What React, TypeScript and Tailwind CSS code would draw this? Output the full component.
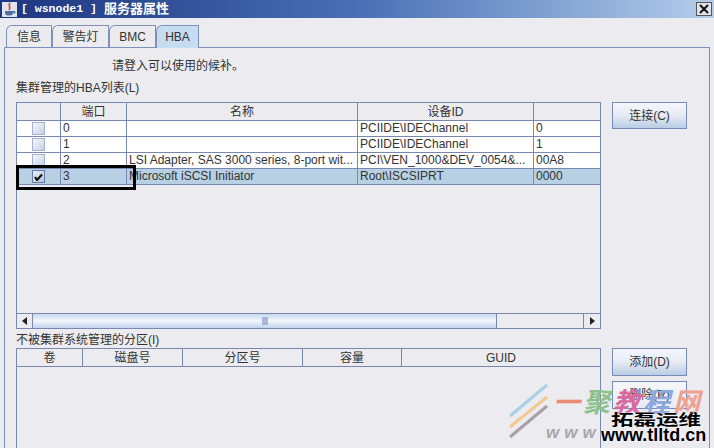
const rows = [
  { port: "0", name: "", dev: "PCIIDE\\IDEChannel", last: "0" },
  { port: "1", name: "", dev: "PCIIDE\\IDEChannel", last: "1" },
  { port: "2", name: "LSI Adapter, SAS 3000 series, 8-port wit...", dev: "PCI\\VEN_1000&DEV_0054&...", last: "00A8" },
  { port: "3", name: "Microsoft iSCSI Initiator", dev: "Root\\ISCSIPRT", last: "0000", selected: true },
]

const Tab = ({ label, width, active }: { label: string; width: string; active?: boolean }) => (
  <div
    className={`${width} h-[23px] -mb-px flex items-center justify-center border border-b-0 border-[#8090bd] rounded-tl-[6px] ${
      active ? "bg-[#c6dcf0] relative z-10" : ""
    }`}
  >
    {label}
  </div>
)

const Button = ({ label, height, faded }: { label: string; height: string; faded?: boolean }) => (
  <div
    className={`w-[75px] ${height} flex items-center justify-center border border-[#7a8ab8] bg-gradient-to-b ${
      faded ? "from-[#f6f7fa] to-[#e8ebf3]" : "from-[#f4f6fa] via-[#e6ebf4] to-[#b9cde4]"
    }`}
  >
    {label}
  </div>
)

const Checkbox = ({ checked }: { checked?: boolean }) => (
  <div
    className={`w-[13px] h-[13px] flex items-center justify-center border bg-gradient-to-br ${
      checked ? "border-[#6a7aa8] from-[#e8edf5] to-[#b4c6de]" : "border-[#a4b2d0] from-[#f6f8fb] to-[#c4d2e6]"
    }`}
  >
    {checked && (
      <svg width="9" height="9" viewBox="0 0 9 9">
        <path d="M1 5 L3 8 L8 2.500" fill="none" stroke="#111" strokeWidth="2.200" />
      </svg>
    )}
  </div>
)

export default function App() {
  return (
    <div className="w-[714px] h-[448px] overflow-hidden relative bg-[repeating-conic-gradient(#e4e4ea_0_25%,#f3f3f5_0_50%)] bg-[length:2px_2px] text-[#333] text-[12px] font-['Liberation_Sans','Noto_Sans_CJK_SC',sans-serif]">
      {/* Title bar */}
      <div className="h-[18px] flex items-center px-[2px] bg-gradient-to-r from-[#1d3680] via-[#4a6fb4] to-[#b4cdea] text-white font-bold">
        <svg width="15" height="15" viewBox="0 0 15 15" className="mr-[4px]">
          <rect width="15" height="15" fill="#dfe4ee" />
          <path d="M8 1 C5 4 10 5 7 8" fill="none" stroke="#d8501e" strokeWidth="1.800" />
          <path d="M3 9 H11 V11 C11 13 9 13.500 7 13.500 C5 13.500 3 13 3 11 Z" fill="#4f70a0" />
          <path d="M11 9.500 H13 V11 H11" fill="none" stroke="#4f70a0" />
        </svg>
        <span className="font-['Liberation_Mono',monospace] text-[11.500px] whitespace-pre">[ wsnode1 ]</span>
        <span className="text-[13px] ml-[7px]">服务器属性</span>
        <div className="ml-auto w-[16px] h-[14px] flex items-center justify-center bg-[#dfe3ea] border border-[#555]">
          <svg width="10" height="10" viewBox="0 0 10 10">
            <path d="M1 1 L9 9 M9 1 L1 9" stroke="#111" strokeWidth="2" />
          </svg>
        </div>
      </div>

      {/* Tabs */}
      <div className="flex mt-[7px] pl-[6px] h-[22px]">
        <Tab label="信息" width="w-[46px]" />
        <Tab label="警告灯" width="w-[57px]" />
        <Tab label="BMC" width="w-[47px]" />
        <Tab label="HBA" width="w-[43px]" active />
      </div>

      <div className="ml-[4px] w-[706px] h-[420px] border border-[#8090bd] px-[11px]">
        <div className="h-[17px] mt-[9px] pl-[96px] flex items-center">请登入可以使用的候补。</div>
        <div className="h-[16px] mt-[6px] flex items-center">集群管理的HBA列表(L)</div>

        <div className="flex gap-[11px] mt-[6px]">
          <div className="w-[585px]">
            {/* HBA table */}
            <div className="h-[212px] border border-[#7a88b0] flex flex-col">
              <div className="grid grid-cols-[44px_66px_231px_176px_1fr] h-[18px] border-b border-[#7a88b0]">
                <div className="border-r border-[#7a88b0]" />
                <div className="border-r border-[#7a88b0] text-center">端口</div>
                <div className="border-r border-[#7a88b0] text-center">名称</div>
                <div className="border-r border-[#7a88b0] text-center">设备ID</div>
                <div />
              </div>
              {rows.map((row) => (
                <div
                  key={row.port}
                  className={`grid grid-cols-[44px_66px_231px_176px_1fr] h-[16px] border-b border-[#7a88b0] leading-[15px] ${
                    row.selected ? "bg-[#b8d0e4]" : "bg-white"
                  }`}
                >
                  <div className="border-r border-[#7a88b0] flex items-center justify-center pr-[1px]">
                    <Checkbox checked={row.selected} />
                  </div>
                  <div className="border-r border-[#7a88b0] pl-[2px]">{row.port}</div>
                  <div className="border-r border-[#7a88b0] pl-[2px] whitespace-nowrap overflow-hidden">{row.name}</div>
                  <div className="border-r border-[#7a88b0] pl-[2px] whitespace-nowrap overflow-hidden">{row.dev}</div>
                  <div className="pl-[2px]">{row.last}</div>
                </div>
              ))}
            </div>
            {/* Scrollbar */}
            <div className="h-[16px] border border-[#7a88b0] flex -mt-px">
              <div className="w-[16px] border-r border-[#7a88b0] flex items-center justify-center">
                <svg width="6" height="8" viewBox="0 0 6 8"><path d="M5 0 V8 L0 4 Z" fill="#222" /></svg>
              </div>
              <div className="w-[464px] border-r border-[#7a88b0] bg-gradient-to-b from-[#c8daf0] via-[#f2f6fb] to-[#c0d4ec] flex items-center justify-center">
                <svg width="6" height="8" viewBox="0 0 6 8"><path d="M1 0 V8 M3 0 V8 M5 0 V8" stroke="#6a80c0" /></svg>
              </div>
              <div className="flex-1 border-r border-[#7a88b0]" />
              <div className="w-[16px] flex items-center justify-center">
                <svg width="6" height="8" viewBox="0 0 6 8"><path d="M1 0 V8 L6 4 Z" fill="#222" /></svg>
              </div>
            </div>
          </div>
          <Button label="连接(C)" height="h-[27px]" />
        </div>

        <div className="h-[16px] mt-[3px] flex items-center">不被集群系统管理的分区(I)</div>

        <div className="flex gap-[11px]">
          <div className="w-[585px] h-[110px] border border-[#7a88b0]">
            <div className="grid grid-cols-[66px_100px_120px_99px_1fr] h-[18px] border-b border-[#7a88b0] text-center">
              {["卷", "磁盘号", "分区号", "容量", "GUID"].map((title, i) => (
                <div key={title} className={i < 4 ? "border-r border-[#7a88b0]" : ""}>
                  {title}
                </div>
              ))}
            </div>
          </div>
          <div className="flex flex-col gap-[5px]">
            <Button label="添加(D)" height="h-[28px]" />
            <Button label="删除(R)" height="h-[28px]" faded />
          </div>
        </div>
      </div>

      {/* Callout box drawn over the selected row */}
      <div className="absolute left-[16px] top-[165px] w-[120px] h-[25px] border-[3px] border-black" />

      {/* Watermark */}
      <svg width="42" height="56" viewBox="0 0 42 56" className="absolute left-[508px] top-[383px]">
        <path d="M2 33 L39 2" stroke="#a8d0e8" strokeWidth="3" />
        <path d="M2 44 L39 14" stroke="#f4c890" strokeWidth="3" />
        <path d="M2 54 L39 23" stroke="#a8a0a8" strokeWidth="3" />
      </svg>
      <div className="absolute left-[553px] top-[388px] flex text-[27px] leading-[30px] font-bold italic tracking-[3px]">
        <span className="text-[#ec8a78]">一</span>
        <span className="text-[#8cc08c]">聚</span>
        <span className="text-[#d86aa0]">教</span>
        <span className="text-[#8aa8dc]">程</span>
        <span className="text-[#f0a090]">网</span>
      </div>
      <div className="absolute left-[546px] top-[425px] text-[17px] leading-[16px] font-bold italic text-[#a8a8ac] tracking-[5px]">
        www
      </div>
      <div className="absolute left-[611px] top-[411px] origin-left scale-x-[1.5] text-[15px] leading-[17px] font-bold text-black [text-shadow:0_0_2px_white]">
        拓磊运维
      </div>
      <div className="absolute left-[601px] top-[426px] text-[18px] leading-[18px] font-bold text-black [text-shadow:0_0_2px_white]">
        www.tlltd.cn
      </div>
    </div>
  )
}
